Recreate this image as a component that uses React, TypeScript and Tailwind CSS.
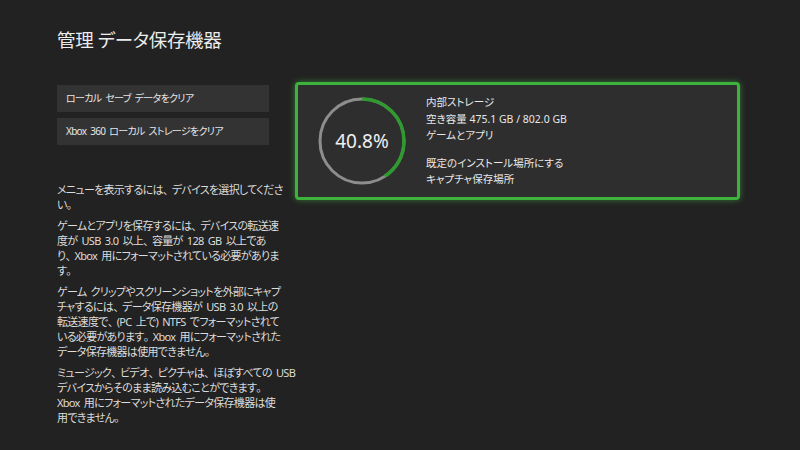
import React from "react";

const font = "font-['Noto_Sans','Noto_Sans_CJK_JP',sans-serif] [font-feature-settings:'palt']";

function J({ text }: { text: string }) {
  const parts = text.split(/([、。])/);
  return (
    <>
      {parts.map((p, i) =>
        p === "、" || p === "。" ? (
          <span key={i} className="[font-feature-settings:normal] tracking-[-2px]">
            {p}
          </span>
        ) : (
          <React.Fragment key={i}>{p}</React.Fragment>
        )
      )}
    </>
  );
}

function Para({ lines, last }: { lines: string[]; last?: boolean }) {
  return (
    <div className={last ? "" : "mb-[6px]"}>
      {lines.map((l, i) => (
        <div key={i} className="whitespace-nowrap">
          <J text={l} />
        </div>
      ))}
    </div>
  );
}

function Ring({ pct }: { pct: number }) {
  const r = 42;
  const c = 2 * Math.PI * r;
  return (
    <div className="relative w-[88px] h-[88px] shrink-0">
      <svg width="88" height="88" viewBox="0 0 88 88" className="absolute inset-0">
        <circle cx="44" cy="44" r={r} fill="none" stroke="#8d8d8d" strokeWidth="3" />
        <circle
          cx="44"
          cy="44"
          r={r}
          fill="none"
          stroke="#2f9a2f"
          strokeWidth="3.5"
          strokeDasharray={`${(c * pct) / 100} ${c}`}
          transform="rotate(-90 44 44)"
        />
      </svg>
      <div className="absolute inset-0 flex items-center justify-center text-[19px] text-[#f0f0f0]">
        {pct}%
      </div>
    </div>
  );
}

export default function App() {
  return (
    <div className={`w-[800px] h-[450px] bg-[#222222] text-[#e8e8e8] overflow-hidden pl-[57px] pt-[28px] ${font}`}>
      <div className="text-[18.5px] leading-[24px] text-[#ececec] tracking-[-0.3px]">管理 データ保存機器</div>
      <div className="flex mt-[30px]">
        <div className="w-[212px] shrink-0 pt-[3px]">
          <div className="flex flex-col gap-[6px]">
            <div className="h-[27px] bg-[#333333] flex items-center pl-[9px] text-[10px] tracking-[-0.7px] [word-spacing:2px] text-[#e6e6e6]">
              ローカル セーブ データをクリア
            </div>
            <div className="h-[27px] bg-[#333333] flex items-center pl-[9px] text-[10px] tracking-[-0.7px] [word-spacing:2px] text-[#e6e6e6]">
              Xbox 360 ローカル ストレージをクリア
            </div>
          </div>
          <div className="mt-[37px] text-[11px] leading-[15px] tracking-[-0.7px] [word-spacing:2px] text-[#dcdcdc]">
            <Para lines={["メニューを表示するには、デバイスを選択してくださ", "い。"]} />
            <Para
              lines={[
                "ゲームとアプリを保存するには、デバイスの転送速",
                "度が USB 3.0 以上、容量が 128 GB 以上であ",
                "り、Xbox 用にフォーマットされている必要がありま",
                "す。",
              ]}
            />
            <Para
              lines={[
                "ゲーム クリップやスクリーンショットを外部にキャプ",
                "チャするには、データ保存機器が USB 3.0 以上の",
                "転送速度で、(PC 上で) NTFS でフォーマットされて",
                "いる必要があります。Xbox 用にフォーマットされた",
                "データ保存機器は使用できません。",
              ]}
            />
            <Para
              last
              lines={[
                "ミュージック、ビデオ、ピクチャは、ほぼすべての USB",
                "デバイスからそのまま読み込むことができます。",
                "Xbox 用にフォーマットされたデータ保存機器は使",
                "用できません。",
              ]}
            />
          </div>
        </div>
        <div className="ml-[26px] w-[445px] h-[118px] shrink-0 rounded-[4px] border-[3px] border-[#3db33d] bg-[#2e2e2e] shadow-[0_0_6px_rgba(70,190,70,0.55)] flex items-center pl-[20px]">
          <Ring pct={40.8} />
          <div className="ml-[20px] text-[10.5px] leading-[16.5px] text-[#e8e8e8]">
            <div className="mb-[11px]">
              <div>内部ストレージ</div>
              <div>空き容量 475.1 GB / 802.0 GB</div>
              <div>ゲームとアプリ</div>
            </div>
            <div>既定のインストール場所にする</div>
            <div>キャプチャ保存場所</div>
          </div>
        </div>
      </div>
    </div>
  );
}
